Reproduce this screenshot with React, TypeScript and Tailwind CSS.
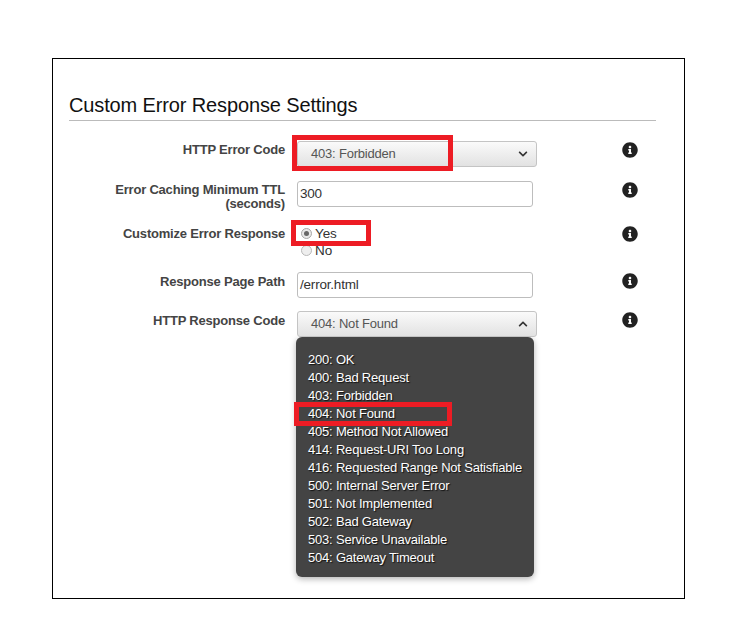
import { FaInfoCircle, FaChevronDown, FaChevronUp } from "react-icons/fa";
import type { ReactNode } from "react";

const options = [
  "200: OK",
  "400: Bad Request",
  "403: Forbidden",
  "404: Not Found",
  "405: Method Not Allowed",
  "414: Request-URI Too Long",
  "416: Requested Range Not Satisfiable",
  "500: Internal Server Error",
  "501: Not Implemented",
  "502: Bad Gateway",
  "503: Service Unavailable",
  "504: Gateway Timeout",
];

function Label({ children }: { children: ReactNode }) {
  return (
    <div className="w-[232px] shrink-0 text-right text-[13px] tracking-[-0.2px] leading-[14px] font-bold text-[#444444]">
      {children}
    </div>
  );
}

function Info() {
  return (
    <div className="absolute left-[569px] top-[1px] text-[#222222]">
      <FaInfoCircle className="w-4 h-4" />
    </div>
  );
}

function Select({ value, up }: { value: string; up?: boolean }) {
  return (
    <div className="w-[240px] h-[26px] flex items-center justify-between pl-[13px] pr-[8px] pb-[1px] rounded-[3px] border border-[#c4c4c4] bg-gradient-to-b from-[#fafafa] to-[#e2e2e2] text-[13px] tracking-[-0.2px] text-[#555555]">
      <span>{value}</span>
      {up ? <FaChevronUp className="w-[10px] h-[10px] text-[#333333]" /> : <FaChevronDown className="w-[10px] h-[10px] text-[#333333]" />}
    </div>
  );
}

function Input({ value }: { value: string }) {
  return (
    <div className="w-[236px] h-[26px] flex items-center pl-[2px] rounded-[3px] border border-[#bdbdbd] bg-white text-[13.5px] tracking-[-0.2px] text-[#333333]">
      {value}
    </div>
  );
}

export default function App() {
  return (
    <div className="w-[734px] h-[634px] bg-white pt-[58px] pl-[52px] font-['Liberation_Sans',Arial,sans-serif]">
      <div className="relative w-[633px] h-[541px] border border-black">
        <div className="ml-[16px] mr-[28px] mt-[34px] pb-[3px] border-b border-[#bbbbbb] text-[20px] tracking-[-0.13px] leading-[24px] text-[#111111]">
          Custom Error Response Settings
        </div>

        <div className="relative flex gap-[12px] mt-[20px]">
          <div className="pt-[2px]"><Label>HTTP Error Code</Label></div>
          <Select value="403: Forbidden" />
          <Info />
        </div>

        <div className="relative flex gap-[12px] mt-[14px]">
          <div className="pt-[2px]"><Label>Error Caching Minimum TTL<br />(seconds)</Label></div>
          <Input value="300" />
          <Info />
        </div>

        <div className="relative flex gap-[12px] mt-[14px]">
          <div className="pt-[2px]"><Label>Customize Error Response</Label></div>
          <div className="flex flex-col text-[13.5px] tracking-[-0.1px] leading-[17px] text-[#333333]">
            <div className="flex items-center gap-[3px] pl-[4px]">
              <span className="w-[11px] h-[11px] rounded-full border border-[#a8a8a8] bg-[#e8e8e8] flex items-center justify-center">
                <span className="w-[5px] h-[5px] rounded-full bg-[#666666]" />
              </span>
              Yes
            </div>
            <div className="flex items-center gap-[3px] pl-[4px]">
              <span className="w-[11px] h-[11px] rounded-full border border-[#b8b8b8] bg-[#eeeeee]" />
              No
            </div>
          </div>
          <Info />
        </div>

        <div className="relative flex gap-[12px] mt-[13px]">
          <div className="pt-[3px]"><Label>Response Page Path</Label></div>
          <Input value="/error.html" />
          <Info />
        </div>

        <div className="relative flex gap-[12px] mt-[13px]">
          <div className="pt-[3px]"><Label>HTTP Response Code</Label></div>
          <Select value="404: Not Found" up />
          <Info />
        </div>

        <div className="ml-[243px] w-[238px] h-[240px] pt-[14px] pl-[12px] rounded-[6px] bg-[#444444] shadow-[0_2px_6px_rgba(0,0,0,0.3)] text-[13px] tracking-[-0.2px] leading-[18px] text-white [text-shadow:1px_1px_1px_#111111]">
          {options.map((o) => (
            <div key={o} className="whitespace-nowrap">{o}</div>
          ))}
        </div>

        <div className="absolute left-[239px] top-[76px] w-[161px] h-[36px] border-[5px] border-[#ed1c24]" />
        <div className="absolute left-[238px] top-[161px] w-[80px] h-[26px] border-[5px] border-[#ed1c24]" />
        <div className="absolute left-[241px] top-[343px] w-[158px] h-[24px] border-[5px] border-[#ed1c24]" />
      </div>
    </div>
  );
}
